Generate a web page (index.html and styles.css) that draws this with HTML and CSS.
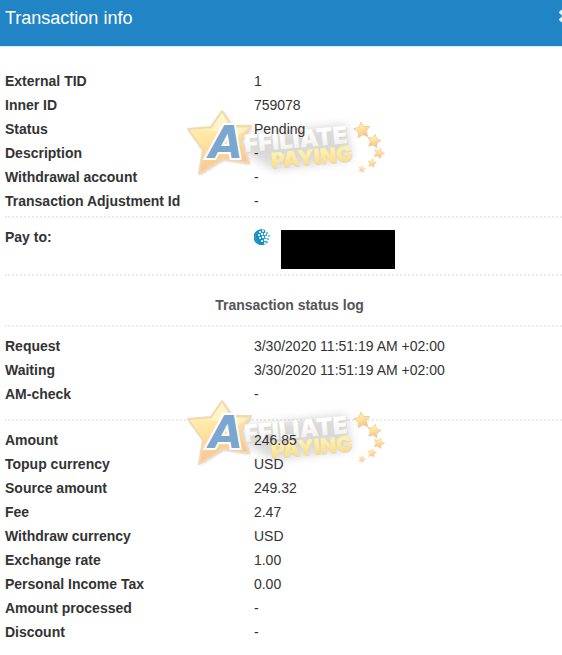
FILE: index.html
```
<!DOCTYPE html>
<html lang="en">
<head>
  <meta charset="utf-8">
  <title>Transaction info</title>
  <link rel="stylesheet" href="styles.css">
</head>
<body>

  <!-- Shared shapes -->
  <svg class="defs" width="0" height="0" aria-hidden="true">
    <defs>
      <linearGradient id="gold" x1="0" y1="0" x2="0.3" y2="1">
        <stop offset="0" stop-color="#fff6c4"/>
        <stop offset="0.5" stop-color="#fee6a0"/>
        <stop offset="1" stop-color="#f9c391"/>
      </linearGradient>
      <linearGradient id="silver" x1="0" y1="0" x2="0" y2="1">
        <stop offset="0.3" stop-color="#ffffff"/>
        <stop offset="1" stop-color="#ececec"/>
      </linearGradient>
      <linearGradient id="yellow" x1="0" y1="0" x2="0" y2="1">
        <stop offset="0.3" stop-color="#fff0a8"/>
        <stop offset="1" stop-color="#fbd578"/>
      </linearGradient>
      <filter id="soft" x="-20%" y="-40%" width="140%" height="180%">
        <feGaussianBlur stdDeviation="5"/>
      </filter>
      <filter id="edge" x="-20%" y="-20%" width="140%" height="140%">
        <feGaussianBlur stdDeviation="1.5"/>
      </filter>
      <path id="star" d="M0 -10 L3 -4 L10 -3 L5 2 L6 9 L0 6 L-6 9 L-5 2 L-10 -3 L-3 -4 Z"/>
      <path id="big-star" d="M36 3 L46 18 L65 18 L55 32 L63 55 L37 51 L13 66 L17 42 L2 21 L25 19 Z"/>
      <symbol id="logo" viewBox="0 0 204 76">
        <path d="M60 28 L160 16 L166 52 L88 62 L60 46 Z" fill="#b4b4b4" opacity="0.5" filter="url(#soft)"/>
        <use href="#big-star" fill="#b8a99c" opacity="0.7" filter="url(#edge)" transform="translate(1 1)"/>
        <use href="#big-star" fill="url(#gold)" stroke="#f3d8b4" stroke-width="2" stroke-linejoin="round"/>
        <path d="M36 5 L45 20 L62 20 L50 29 Q34 20 8 23 L26 21 Z" fill="#fffbe0" opacity="0.6"/>
        <g transform="rotate(-5 62 45)">
          <text class="logo-shade logo-top" x="60" y="45">FFILIATE</text>
          <text class="logo-top" x="59" y="44" fill="url(#silver)">FFILIATE</text>
          <text class="logo-shade logo-bottom" x="85" y="63">PAYING</text>
          <text class="logo-bottom" x="84" y="62" fill="url(#yellow)">PAYING</text>
        </g>
        <text class="logo-a" x="23" y="50">A</text>
        <g fill="url(#gold)" stroke="#efc795" stroke-width="1" stroke-linejoin="round">
          <use href="#star" transform="translate(176 22) rotate(-8) scale(0.8)"/>
          <use href="#star" transform="translate(188 33) rotate(12) scale(0.68)"/>
          <use href="#star" transform="translate(193 45) rotate(20) scale(0.54)"/>
          <use href="#star" transform="translate(186 55) rotate(8) scale(0.44)"/>
          <use href="#star" transform="translate(176 61) rotate(16) scale(0.34)"/>
        </g>
      </symbol>
    </defs>
  </svg>

  <div class="modal">
    <header class="modal-header">
      <h1>Transaction info</h1>
      <button type="button" class="close" aria-label="Close">
        <svg width="12" height="12" viewBox="0 0 12 12"><path d="M1 1 L11 11 M11 1 L1 11" stroke="#e3f1fb" stroke-width="4"/></svg>
      </button>
    </header>

    <div class="modal-body">
      <!-- Main details -->
      <section class="group group-main">
        <svg class="watermark" aria-hidden="true"><use href="#logo"/></svg>
        <dl class="details">
          <dt>External TID</dt><dd>1</dd>
          <dt>Inner ID</dt><dd>759078</dd>
          <dt>Status</dt><dd>Pending</dd>
          <dt>Description</dt><dd>-</dd>
          <dt>Withdrawal account</dt><dd>-</dd>
          <dt>Transaction Adjustment Id</dt><dd>-</dd>
        </dl>
      </section>

      <!-- Payee -->
      <section class="group group-pay">
        <dl class="details">
          <dt>Pay to:</dt>
          <dd class="payee">
            <svg width="16" height="16" viewBox="0 0 16 16" role="img" aria-label="WebMoney">
              <path d="M11 1 A8 8 0 1 0 13 14 L12 11 L13 6 Z" fill="#1b8fc4"/>
              <path d="M4 2 A8 8 0 0 0 3 13 Q0 7 4 2 Z" fill="#53b6dc"/>
              <g fill="#ffffff">
                <circle cx="6" cy="3" r="1"/><circle cx="9" cy="2" r="1"/><circle cx="12" cy="3" r="1"/>
                <circle cx="5" cy="6" r="1"/><circle cx="8" cy="5" r="1.2"/><circle cx="11" cy="5" r="1.2"/>
                <circle cx="6" cy="9" r="1"/><circle cx="9" cy="8" r="1.2"/><circle cx="12" cy="8" r="1.2"/>
                <circle cx="8" cy="12" r="1"/><circle cx="11" cy="11" r="1.2"/><circle cx="11" cy="14" r="1"/>
              </g>
              <g fill="#53b6dc">
                <circle cx="13" cy="4" r="1"/><circle cx="15" cy="7" r="1"/>
                <circle cx="14" cy="10" r="1"/><circle cx="13" cy="13" r="1"/>
              </g>
            </svg>
            <span class="redacted"></span>
          </dd>
        </dl>
      </section>

      <section class="group group-title">
        <h2>Transaction status log</h2>
      </section>

      <!-- Status log -->
      <section class="group group-log">
        <dl class="details">
          <dt>Request</dt><dd>3/30/2020 11:51:19 AM +02:00</dd>
          <dt>Waiting</dt><dd>3/30/2020 11:51:19 AM +02:00</dd>
          <dt>AM-check</dt><dd>-</dd>
        </dl>
      </section>

      <!-- Amounts -->
      <section class="group group-amounts">
        <svg class="watermark" aria-hidden="true"><use href="#logo"/></svg>
        <dl class="details">
          <dt>Amount</dt><dd>246.85</dd>
          <dt>Topup currency</dt><dd>USD</dd>
          <dt>Source amount</dt><dd>249.32</dd>
          <dt>Fee</dt><dd>2.47</dd>
          <dt>Withdraw currency</dt><dd>USD</dd>
          <dt>Exchange rate</dt><dd>1.00</dd>
          <dt>Personal Income Tax</dt><dd>0.00</dd>
          <dt>Amount processed</dt><dd>-</dd>
          <dt>Discount</dt><dd>-</dd>
        </dl>
      </section>
    </div>
  </div>

</body>
</html>
```

FILE: styles.css
```
body {
  margin: 0;
  overflow-x: hidden;
  background: #fff;
  color: #333;
  font-family: Arial, "Liberation Sans", sans-serif;
  font-size: 14px;
  line-height: 24px;
}

.defs {
  position: absolute;
}

/* The dialog runs a little past the right edge of the window */
.modal {
  margin-right: -17px;
}

.modal-header {
  display: flex;
  justify-content: space-between;
  align-items: flex-start;
  padding: 6px 8px 16px 5px;
  background: #2185c5;
  border-bottom: 1px solid #d6e9f6;
}

.modal-header h1 {
  margin: 0;
  color: #fff;
  font-size: 18px;
  font-weight: normal;
}

.close {
  display: flex;
  margin-top: 4px;
  padding: 0;
  border: none;
  background: none;
  cursor: pointer;
}

.modal-body {
  padding: 0 5px;
}

/* Sections split by dotted lines */
.group {
  position: relative;
  padding-top: 7px;
  border-top: 2px dotted #ececec;
}

.group-main {
  padding: 22px 0 3px;
  border-top: none;
}

.group-pay {
  padding-bottom: 5px;
}

.group-title {
  padding: 17px 0 8px;
}

.group-title h2 {
  margin: 0;
  color: #555;
  font-size: 14px;
  text-align: center;
}

.group-log {
  padding-bottom: 13px;
}

/* Label / value list */
.details {
  position: relative;
  display: grid;
  grid-template-columns: 7fr 9fr;
  margin: 0;
}

.details dt {
  font-weight: bold;
}

.details dd {
  margin: 0;
}

.payee {
  display: flex;
  align-items: flex-start;
  gap: 11px;
  padding-top: 4px;
}

.redacted {
  width: 114px;
  height: 39px;
  margin-top: 1px;
  background: #000;
}

/* Logo behind the values */
.watermark {
  position: absolute;
  top: 61px;
  left: 181px;
  width: 204px;
  height: 76px;
}

.group-amounts .watermark {
  top: -23px;
}

.logo-top,
.logo-bottom {
  font-family: Inter, "Liberation Sans", sans-serif;
  font-weight: 900;
}

.logo-top {
  font-size: 24px;
}

.logo-bottom {
  font-size: 21px;
}

.logo-shade {
  fill: #ddd6ca;
}

.logo-a {
  font-family: "DejaVu Sans", "Liberation Sans", sans-serif;
  font-size: 44px;
  font-style: italic;
  font-weight: bold;
  fill: #7aa6cf;
  stroke: #fff;
  stroke-width: 4px;
  paint-order: stroke;
}
```
